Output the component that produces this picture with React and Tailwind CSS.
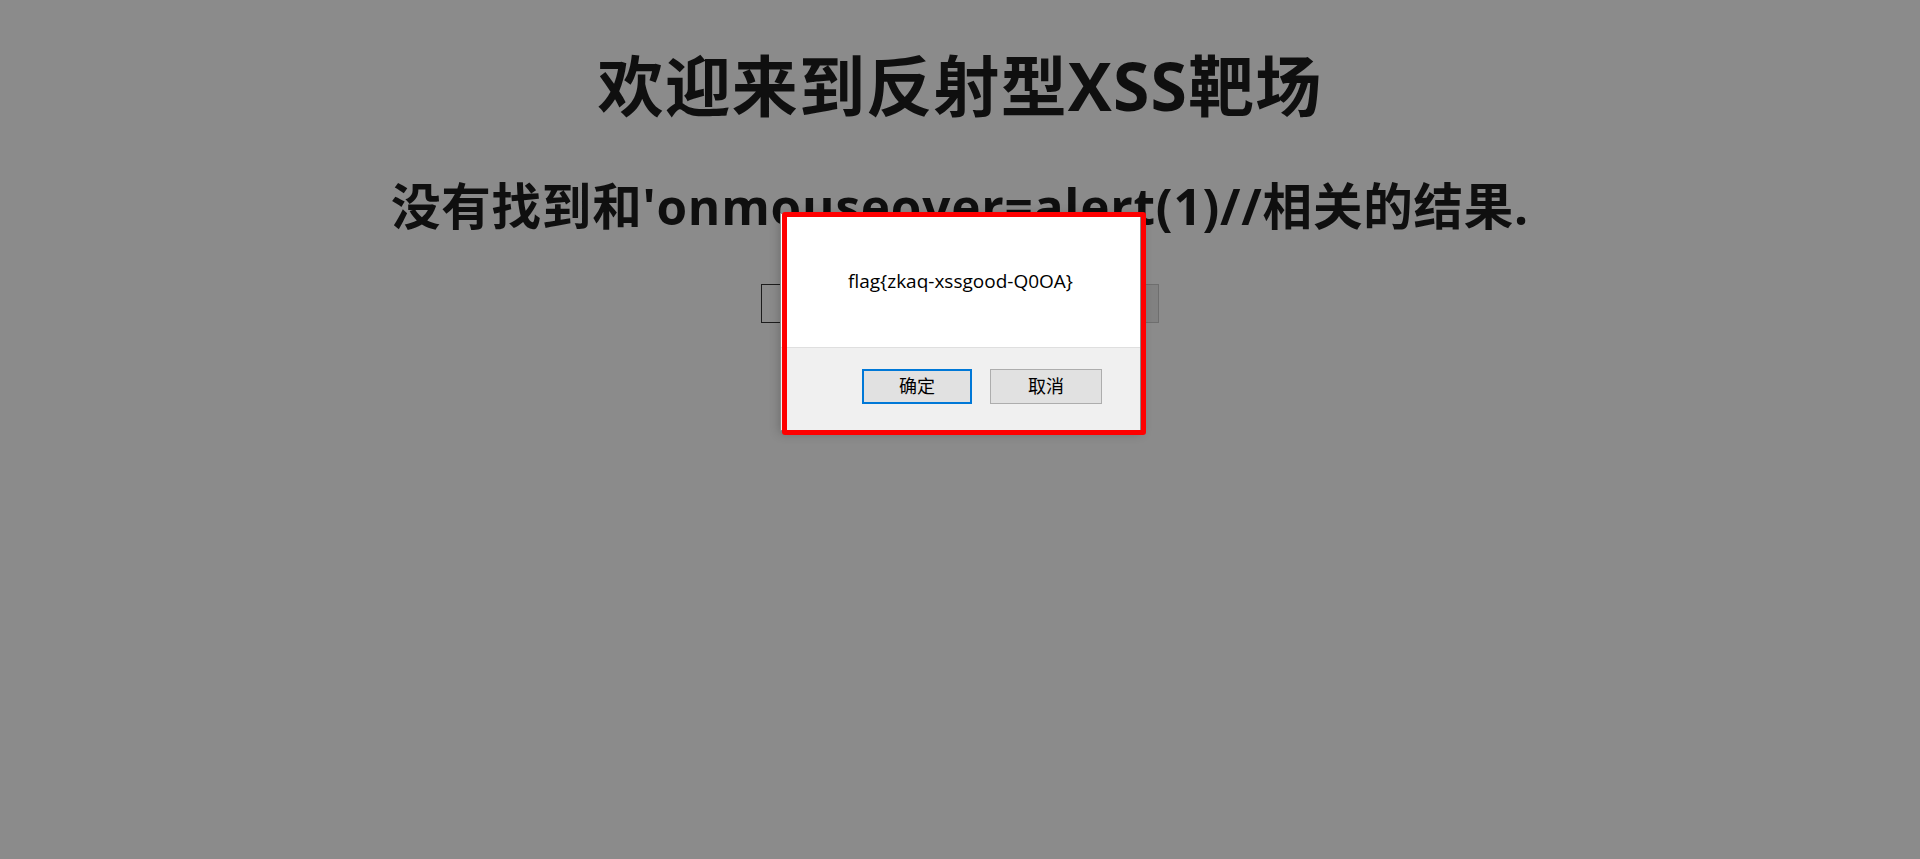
export default function App() {
  return (
    <div className="relative min-h-[859px] overflow-hidden bg-[#8b8b8b] font-[family-name:'Open_Sans','Noto_Sans_CJK_SC',sans-serif] text-[#0f0f0f]">
      {/* page under the alert */}
      <div className="flex flex-col items-center pt-[52px]">
        <h1 className="text-[66px] leading-[66px] font-bold tracking-[1.2px]">欢迎来到反射型XSS靶场</h1>
        <h2 className="mt-[64px] text-[49.5px] leading-[49.5px] font-bold tracking-[0.8px]">
          没有找到和'onmouseover=alert(1)//相关的结果.
        </h2>
        <form className="mt-[52px] flex">
          <input
            type="text"
            className="h-[39px] w-[340px] border border-[#1c1c1c] bg-transparent"
          />
          <button type="button" className="h-[39px] w-[58px] border border-[#6e6e6e] bg-[#818181]" />
        </form>
      </div>

      {/* alert dialog */}
      <div className="absolute left-[780px] top-[213px] flex h-[218px] w-[361px] flex-col border border-[#8a8a8a] bg-white shadow-[0_2px_10px_rgba(0,0,0,0.25)]">
        <div className="h-[134px] border-b border-[#dfdfdf] pt-[55px] text-center text-[19px] leading-[24px] text-black">
          flag{'{'}zkaq-xssgood-Q0OA{'}'}
        </div>
        <div className="flex flex-1 justify-end gap-[18px] bg-[#f0f0f0] pr-[38px] pt-[21px] font-[family-name:'Noto_Sans_CJK_SC',sans-serif] text-[18px] text-black">
          <button className="h-[35px] w-[110px] border-2 border-[#0078d7] bg-[#e1e1e1] pb-[3px] leading-none">确定</button>
          <button className="h-[35px] w-[112px] border border-[#adadad] bg-[#e1e1e1] pb-[3px] leading-none">取消</button>
        </div>
      </div>

      {/* red highlight */}
      <div className="absolute left-[782px] top-[212px] h-[223px] w-[364px] rounded-[3px] border-[5px] border-[#ff0000]" />
    </div>
  )
}
